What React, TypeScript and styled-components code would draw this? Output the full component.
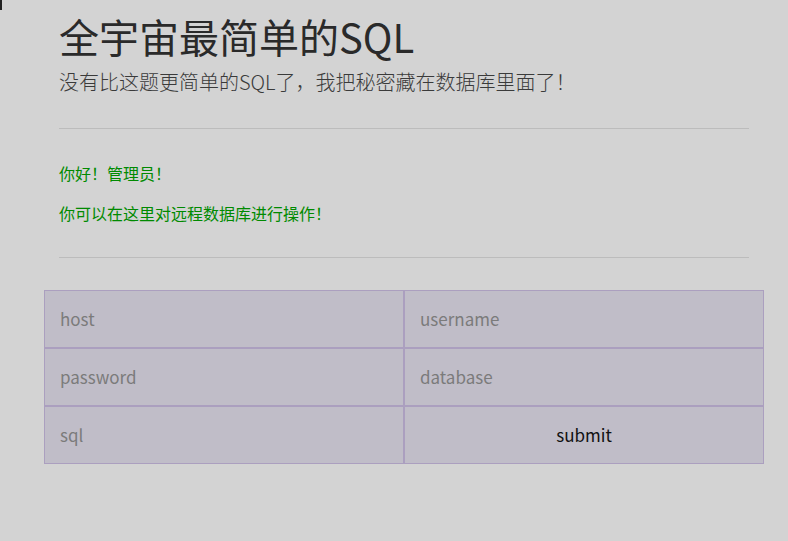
import React from 'react';
import styled, { createGlobalStyle } from 'styled-components';

const GlobalStyle = createGlobalStyle`
  html, body {
    margin: 0;
    padding: 0;
    background-color: #d3d3d3;
    font-family: 'Noto Sans CJK SC', 'Noto Sans', sans-serif;
  }
`;

const Page = styled.div`
  position: relative;
  width: 788px;
  height: 541px;
  overflow: hidden;
`;

const Caret = styled.span`
  position: absolute;
  left: 0;
  top: 0;
  width: 2px;
  height: 10px;
  background-color: #222;
`;

const Container = styled.div`
  width: 720px;
  margin-left: 44px;
  padding-top: 14px;
`;

const Header = styled.div`
  padding: 0 15px;
`;

const Title = styled.h1`
  margin: 0;
  font-size: 40px;
  line-height: 44px;
  font-weight: 400;
  color: #2a2a2a;
`;

const Subtitle = styled.p`
  margin: 10px 0 0;
  font-size: 20px;
  line-height: 28px;
  font-weight: 300;
  color: #3a3a3a;
`;

const Rule = styled.hr<{ $top?: number }>`
  border: none;
  border-top: 1px solid #bcbcbc;
  margin: ${props => props.$top ?? 0}px 0 0;
`;

const Notice = styled.p`
  margin: 0;
  font-size: 16px;
  line-height: 24px;
  color: #008a00;

  & + & {
    margin-top: 16px;
  }
`;

const Messages = styled.div`
  padding: 32px 0 32px;
`;

const Form = styled.form`
  display: grid;
  grid-template-columns: 360px 360px;
  grid-auto-rows: 58px;
  margin-top: 32px;
`;

const Field = styled.input`
  box-sizing: border-box;
  width: 100%;
  height: 100%;
  margin: 0;
  padding: 0 15px 2px;
  border: 1px solid #ab9fbf;
  background-color: #c0bdc8;
  font-family: inherit;
  font-size: 17px;
  color: #333;
  outline: none;

  &::placeholder {
    color: #7b7b7b;
  }
`;

const Submit = styled.button`
  box-sizing: border-box;
  width: 100%;
  height: 100%;
  margin: 0;
  padding: 0 0 2px;
  border: 1px solid #ab9fbf;
  background-color: #c0bdc8;
  font-family: inherit;
  font-size: 17px;
  color: #111;
  cursor: pointer;
`;

const App: React.FC = () => {
  return (
    <Page>
      <GlobalStyle />
      <Caret />
      <Container>
        <Header>
          <Title>全宇宙最简单的SQL</Title>
          <Subtitle>没有比这题更简单的SQL了，我把秘密藏在数据库里面了！</Subtitle>
          <Rule $top={32} />
          <Messages>
            <Notice>你好！管理员！</Notice>
            <Notice>你可以在这里对远程数据库进行操作！</Notice>
          </Messages>
          <Rule />
        </Header>
        <Form onSubmit={e => e.preventDefault()}>
          <Field name="host" placeholder="host" />
          <Field name="username" placeholder="username" />
          <Field name="password" type="password" placeholder="password" />
          <Field name="database" placeholder="database" />
          <Field name="sql" placeholder="sql" />
          <Submit type="submit">submit</Submit>
        </Form>
      </Container>
    </Page>
  );
};

export default App;
